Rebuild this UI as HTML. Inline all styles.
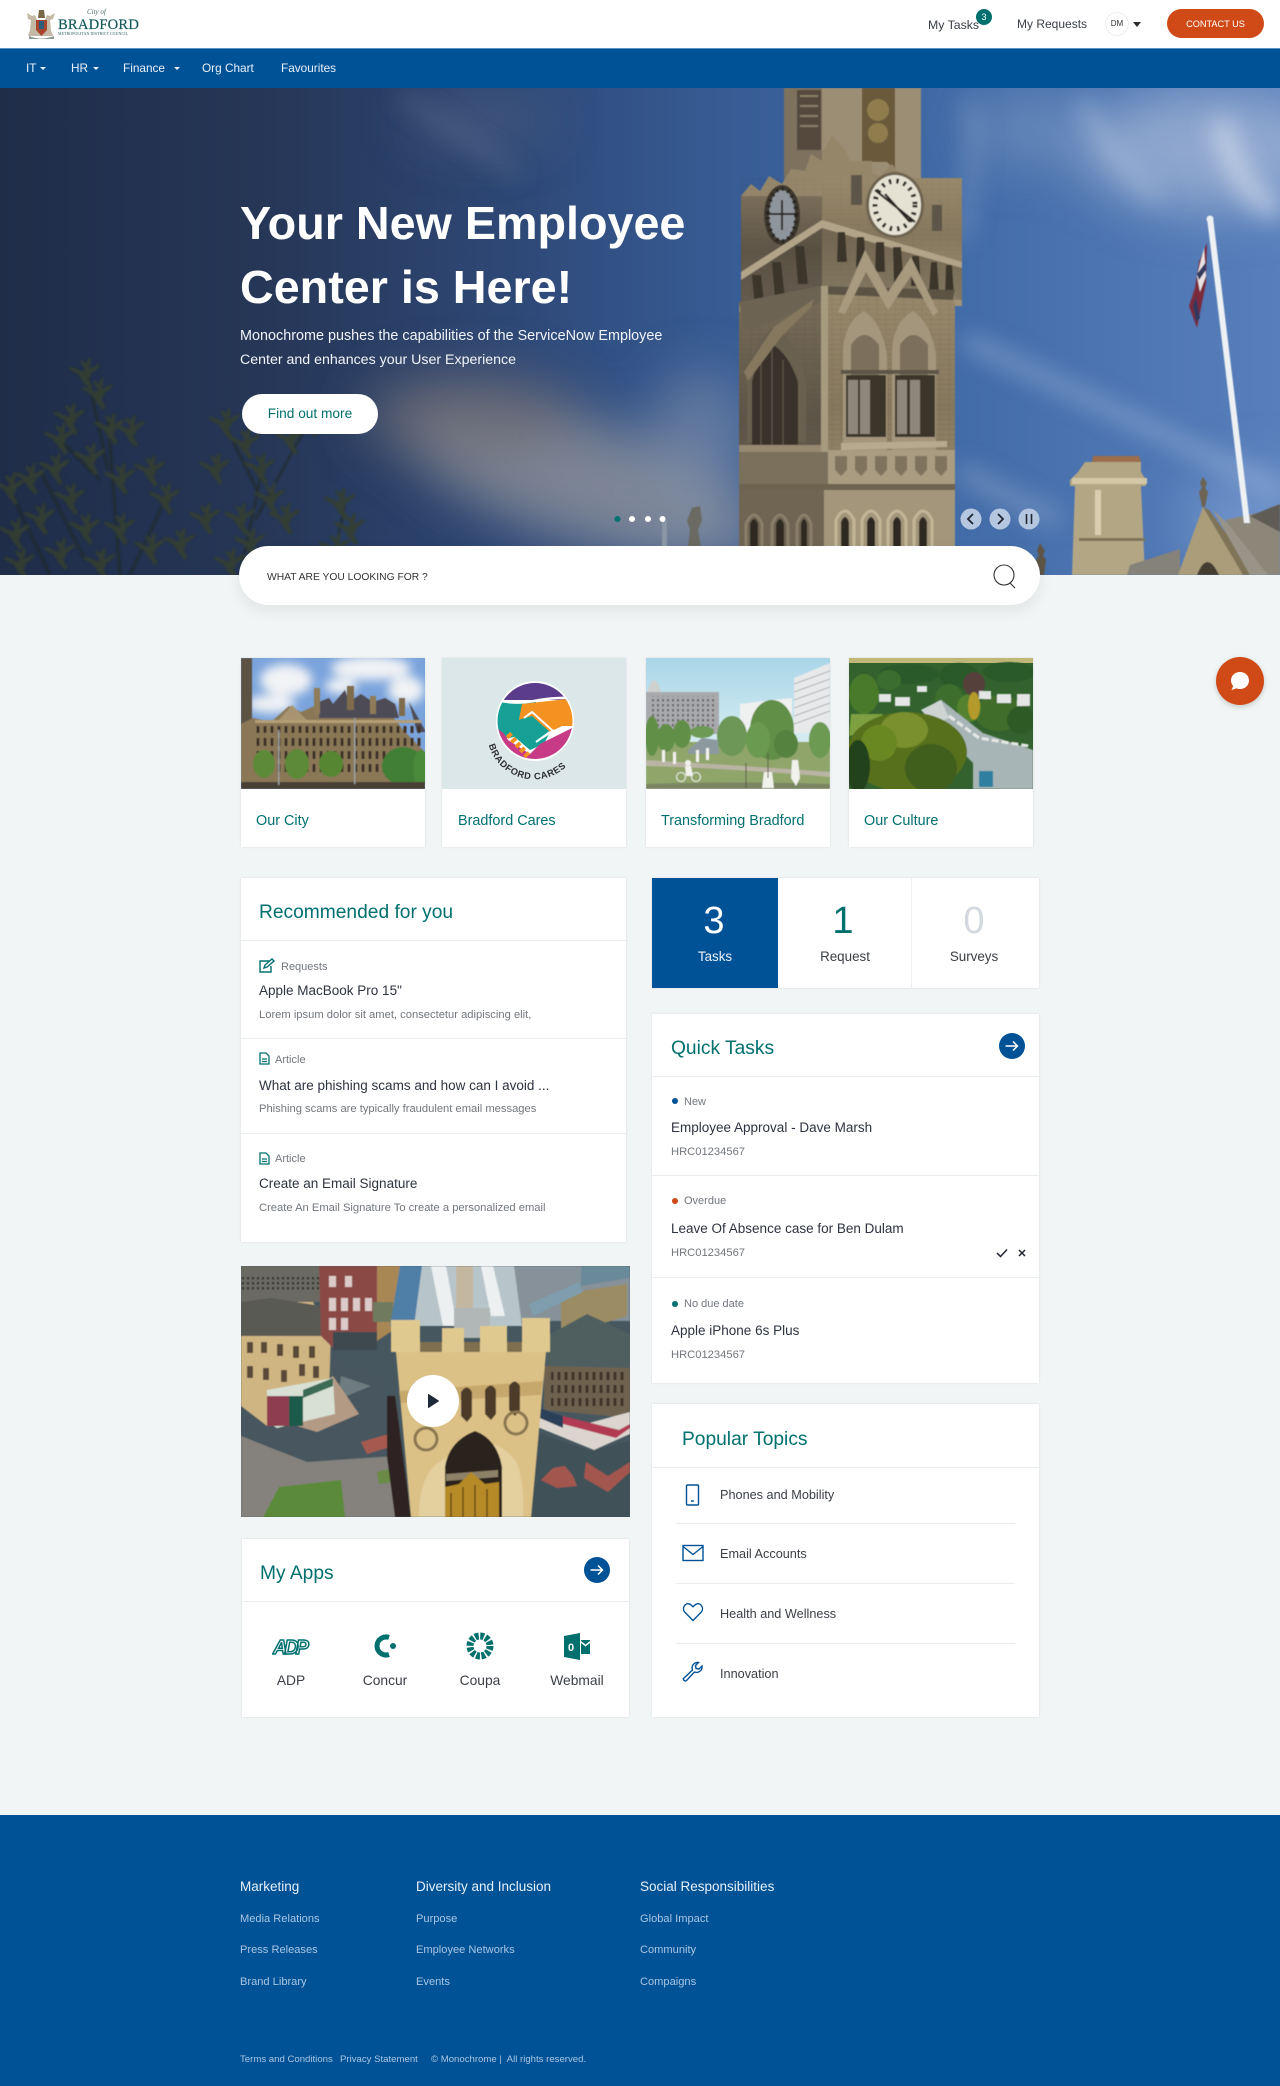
<!DOCTYPE html>
<html lang="en">
<head>
<meta charset="utf-8">
<title>Employee Center</title>
<style>
*{box-sizing:border-box}
html,body{margin:0;padding:0}
body{width:1280px;height:2086px;position:relative;overflow:hidden;background:#f1f5f5;font-family:"Liberation Sans",sans-serif;color:#2d3340}
.t{position:absolute;white-space:nowrap;line-height:20px;height:20px}
.c{transform:translateX(-50%)}
.box{position:absolute;background:#fff;box-shadow:0 0 2px rgba(0,0,0,.12)}
.ln{position:absolute;height:1px;background:#e9eded}
svg{position:absolute;display:block}
.h{color:#00706f;font-size:19.2px}
.ti{font-size:13.5px;color:#2d3340}
.su{font-size:11.2px;color:#72777d}
.la{font-size:11px;color:#72777d}
.nav{color:#e8f1fa;font-size:11.8px}
.fh{color:#e6f0fa;font-size:13.5px}
.fl{color:#a9c5e3;font-size:11.1px}
.fb{color:#a9c5e3;font-size:9.6px}
.cap{color:#00706f;font-size:14.4px}
.pt{font-size:12.7px;color:#3a3f46}
</style>
</head>
<body>

<!-- header -->
<div style="position:absolute;left:0;top:0;width:1280px;height:49px;background:#fff;border-bottom:1px solid #5b93c4"></div>
<svg style="left:25px;top:8px" width="33" height="34" viewBox="0 0 33 34">
<path d="M2 5l5 3 3-1 2 5h8l2-5 3 1 5-3-2 6-3 1 1 10 2 6H3l2-6 1-10-3-1z" fill="#c4b9a4"/>
<path d="M11 12h11v10l-5.500 6-5.500-6z" fill="#a8452f"/>
<path d="M14 13h5v8h-5z" fill="#2c5d7c"/>
<path d="M14 2h5l1 8h-7z" fill="#7a6648"/>
<path d="M4 28q12 5 25 0v3H4z" fill="#8a9a8e"/>
</svg>
<div class="t" style="left:87px;top:5px;font:italic 7px/14px 'Liberation Serif',serif;color:#476a68">City of</div>
<div class="t" style="left:58px;top:15px;font:14.6px/20px 'Liberation Serif',serif;color:#14595a;letter-spacing:.2px;-webkit-text-stroke:.2px #14595a">BRADFORD</div>
<div class="t" style="left:58px;top:29px;font:3.9px/10px 'Liberation Serif',serif;color:#2c5a5a;letter-spacing:.12px">METROPOLITAN DISTRICT COUNCIL</div>

<div class="t" style="left:928px;top:15px;font-size:12.3px;color:#3a3f46">My Tasks</div>
<div style="position:absolute;left:976px;top:9px;width:16px;height:16px;border-radius:50%;background:#00706f;color:#fff;font-size:9px;line-height:16px;text-align:center">3</div>
<div class="t" style="left:1017px;top:14px;font-size:12px;color:#3a3f46">My Requests</div>
<div style="position:absolute;left:1105px;top:12px;width:24px;height:24px;border-radius:50%;border:1px solid #eceeee;background:#fff;color:#333;font-size:8px;line-height:22px;text-align:center">DM</div>
<svg style="left:1133px;top:22px" width="8" height="5"><path d="M0 0h8L4 5z" fill="#2a2a2a"/></svg>
<div style="position:absolute;left:1167px;top:9px;width:97px;height:29px;border-radius:15px;background:#d04a17;color:#fff;font-size:9.2px;line-height:30px;text-align:center">CONTACT US</div>

<div style="position:absolute;left:0;top:49px;width:1280px;height:39px;background:#005296"></div>
<div class="t nav" style="left:26px;top:58px">IT</div>
<svg style="left:40px;top:67px" width="6" height="3"><path d="M0 0h6L3 3z" fill="#e8f1fa"/></svg>
<div class="t nav" style="left:71px;top:58px">HR</div>
<svg style="left:93px;top:67px" width="6" height="3"><path d="M0 0h6L3 3z" fill="#e8f1fa"/></svg>
<div class="t nav" style="left:123px;top:58px">Finance</div>
<svg style="left:174px;top:67px" width="6" height="3"><path d="M0 0h6L3 3z" fill="#e8f1fa"/></svg>
<div class="t nav" style="left:202px;top:58px">Org Chart</div>
<div class="t nav" style="left:281px;top:58px">Favourites</div>

<!-- hero -->
<svg style="left:0;top:88px" width="1280" height="487" viewBox="0 88 1280 487">
<defs>
<linearGradient id="sky" x1="0" x2="1" y1="0" y2="0">
<stop offset="0" stop-color="#1f2d49"/><stop offset=".2" stop-color="#263656"/><stop offset=".4" stop-color="#2e4876"/><stop offset=".55" stop-color="#365a92"/><stop offset=".75" stop-color="#426ca8"/><stop offset="1" stop-color="#587fbb"/>
</linearGradient>
<linearGradient id="tR" x1="0" x2="0" y1="0" y2="1">
<stop offset="0" stop-color="#98896c"/><stop offset=".45" stop-color="#86785e"/><stop offset="1" stop-color="#a39679"/>
</linearGradient>
<linearGradient id="tL" x1="0" x2="0" y1="0" y2="1">
<stop offset="0" stop-color="#7a6e5a"/><stop offset=".5" stop-color="#5e5547"/><stop offset="1" stop-color="#74695a"/>
</linearGradient>
<pattern id="course" width="9" height="5" patternUnits="userSpaceOnUse"><path d="M0 4.500h9M4 0v4.500" stroke="#3b3429" stroke-width=".5" opacity=".18"/></pattern>
<filter id="b30" x="-30%" y="-30%" width="160%" height="160%"><feGaussianBlur stdDeviation="26"/></filter>
<filter id="b12" x="-30%" y="-30%" width="160%" height="160%"><feGaussianBlur stdDeviation="12"/></filter>
<filter id="b1" x="-5%" y="-5%" width="110%" height="110%"><feGaussianBlur stdDeviation=".6"/></filter>
<filter id="b2" x="-5%" y="-5%" width="110%" height="110%"><feGaussianBlur stdDeviation="1"/></filter>
<g id="tuft">
<ellipse cx="-9" cy="0" rx="9" ry="2.200" transform="rotate(25)"/><ellipse cx="9" cy="0" rx="9" ry="2.200" transform="rotate(-35)"/>
<ellipse cx="0" cy="-9" rx="2.200" ry="9" transform="rotate(15)"/><ellipse cx="0" cy="8" rx="2.200" ry="8" transform="rotate(-20)"/>
<ellipse cx="-7" cy="-6" rx="7" ry="2" transform="rotate(50)"/><ellipse cx="7" cy="5" rx="7" ry="2" transform="rotate(40)"/>
<ellipse cx="0" cy="0" rx="6" ry="4"/>
</g>
</defs>
<rect x="0" y="88" width="1280" height="487" fill="url(#sky)"/>
<!-- clouds -->
<g filter="url(#b30)">
<ellipse cx="580" cy="480" rx="190" ry="60" fill="#95979c" opacity=".75" transform="rotate(18 580 480)"/>
<ellipse cx="470" cy="415" rx="110" ry="42" fill="#6c6b72" opacity=".7"/>
<ellipse cx="700" cy="440" rx="50" ry="70" fill="#8794aa" opacity=".55"/>
<ellipse cx="1210" cy="150" rx="130" ry="60" fill="#a9bbd8" opacity=".7"/>
<ellipse cx="1030" cy="130" rx="60" ry="35" fill="#8ea5cc" opacity=".45"/>
<ellipse cx="1260" cy="520" rx="80" ry="50" fill="#7e9ed2" opacity=".6"/>
<ellipse cx="480" cy="120" rx="70" ry="25" fill="#59688a" opacity=".5"/>
</g>
<g filter="url(#b12)">
<path d="M400 95L520 175" stroke="#7d8aa3" stroke-width="9" opacity=".4" fill="none"/>
<path d="M965 340L1280 490" stroke="#a9bfe3" stroke-width="10" opacity=".75" fill="none"/>
<path d="M1080 100Q1120 170 1160 200" stroke="#cad5ea" stroke-width="12" opacity=".45" fill="none"/>
<path d="M1220 120Q1240 200 1280 210" stroke="#e3e9f3" stroke-width="22" opacity=".6" fill="none"/>
<path d="M970 100Q980 160 960 240" stroke="#a7b9d7" stroke-width="12" opacity=".4" fill="none"/>
<path d="M960 470Q1010 500 1060 520" stroke="#9fb3d6" stroke-width="16" opacity=".5" fill="none"/>
</g>

<!-- tree -->
<g filter="url(#b2)" opacity=".85">
<path d="M108 420L120 575M88 375L108 470M60 440L100 480M40 470L85 560M262 470L240 575M225 425L262 500M310 420L255 520M345 505L330 575M10 490L50 575M165 500L130 575" stroke="#22291f" stroke-width="1.800" fill="none"/>
<g fill="#353f2d">
<use href="#tuft" x="85" y="375"/><use href="#tuft" x="98" y="395"/><use href="#tuft" x="70" y="420"/><use href="#tuft" x="110" y="430"/><use href="#tuft" x="60" y="440"/><use href="#tuft" x="130" y="432"/><use href="#tuft" x="90" y="460"/><use href="#tuft" x="55" y="470"/><use href="#tuft" x="30" y="480"/><use href="#tuft" x="10" y="490"/><use href="#tuft" x="70" y="500"/><use href="#tuft" x="120" y="480"/><use href="#tuft" x="150" y="472"/><use href="#tuft" x="165" y="500"/><use href="#tuft" x="40" y="520"/><use href="#tuft" x="85" y="530"/><use href="#tuft" x="120" y="530"/><use href="#tuft" x="15" y="535"/><use href="#tuft" x="60" y="555"/><use href="#tuft" x="100" y="565"/><use href="#tuft" x="150" y="550"/><use href="#tuft" x="20" y="565"/><use href="#tuft" x="225" y="425"/><use href="#tuft" x="245" y="445"/><use href="#tuft" x="215" y="470"/><use href="#tuft" x="260" y="470"/><use href="#tuft" x="290" y="440"/><use href="#tuft" x="310" y="422"/><use href="#tuft" x="270" y="500"/><use href="#tuft" x="240" y="520"/><use href="#tuft" x="285" y="520"/><use href="#tuft" x="205" y="520"/><use href="#tuft" x="250" y="545"/><use href="#tuft" x="340" y="505"/><use href="#tuft" x="350" y="530"/><use href="#tuft" x="335" y="550"/><use href="#tuft" x="230" y="565"/><use href="#tuft" x="180" y="545"/>
</g>
</g>

<!-- chimney and gable right -->
<g filter="url(#b1)">
<path d="M1085 462h56v10l5 8v6h-5l4 89h-73l3-89h-5v-6l8-8z" fill="#b3a685"/>
<path d="M1092 462l1-6h46l2 6z" fill="#9c6d4c"/>
<path d="M1072 478h75v6h-75z" fill="#d3c8a6"/>
<path d="M1079 538h66v3h-66z" fill="#7f7359"/>
<path d="M1095 490h6v45h-6z" fill="#d9cfb0"/>
<path d="M1127 575l3-10 50-16v26z" fill="#85827a"/>
<path d="M1244 575l-41-68-25 68z" fill="#ab9d79"/>
<path d="M1203 507l6 3 48 65h-14z" fill="#7f7359"/>
<path d="M1213 510l14 13 53 52h-30z" fill="#9a9488"/>
<path d="M1225 520l27-6 28-5v66h-12z" fill="#8d877a"/>
<path d="M1250 516l30-12v28z" fill="#5f5b54"/>
<path d="M1197 575q10-26 22 0z" fill="#453d31"/>
<path d="M1203 477l-3 6 2 5-3 4 3 15h3l3-15-3-4 2-5z" fill="#6d6352"/>
<path d="M1040 543l-3 8 2 4-3 5 2 15h6l2-15-3-5 2-4z" fill="#5e5546"/>
<!-- flag -->
<path d="M1207 218l6-1 37 306h-6z" fill="#eef1f4"/>
<circle cx="1210" cy="219" r="3.500" fill="#eef1f4"/>
<path d="M1207 243l-1 40-9 45-8-22 6-18 4-26z" fill="#7b2a3a"/>
<path d="M1204 248l2 28-6 16-3-16z" fill="#e9e3e3"/>
<path d="M1196 296l4 22-4 4-3-16z" fill="#31375f"/>
<path d="M1206 262l-9 12 2 6 7-10z" fill="#31375f"/>
<!-- statue -->
<path d="M692 508l8-2 2 14-4 10 3 17h-13l2-18-3-8z" fill="#6b6a62"/>
<path d="M662 520h5v27h-5z" fill="#8b97a6"/>
</g>

<!-- tower -->
<g filter="url(#b1)">
<rect x="784" y="88" width="137" height="110" fill="#9c8e74"/>
<rect x="784" y="88" width="38" height="110" fill="#7e725f"/>
<path d="M862 88h33v82l-8-8h-25z" fill="#6a5a3a"/>
<circle cx="878" cy="110" r="11" fill="#8f7d4e"/><circle cx="878" cy="133" r="10" fill="#8f7d4e"/>
<path d="M797 90h24v60h-24z" fill="#544a3e"/>
<path d="M800 95h18v2h-18zM800 105h18v2h-18zM800 115h18v2h-18zM800 125h18v2h-18z" fill="#8a7d67"/>
<path d="M741 196l10-12 9 7 9-15 13 8 9-15 14 2 6-17 11 7v-8l10-18 14 16 4 10h22v12l8 3 12-12 10 14h8l14 10-2 4 10 8 10 3-2 4H741z" fill="#95866a"/>
<path d="M741 196h81v110h-81z" fill="url(#tL)"/>
<path d="M822 178h140v128H822z" fill="url(#tR)"/>
<rect x="741" y="178" width="221" height="128" fill="url(#course)" opacity=".5"/>
<!-- clocks -->
<ellipse cx="782" cy="215" rx="18" ry="30" fill="#3d372f"/>
<ellipse cx="782" cy="215" rx="13" ry="25" fill="#8f959c"/>
<path d="M766 214h30M782 200v30" stroke="#2c2823" stroke-width="2"/>
<ellipse cx="782" cy="215" rx="14" ry="26" fill="none" stroke="#26221d" stroke-width="4" stroke-dasharray="2 4"/>
<ellipse cx="895" cy="205" rx="29" ry="33" fill="#6e6350"/>
<ellipse cx="895" cy="205" rx="26" ry="30" fill="#e5e2d3"/>
<ellipse cx="895" cy="205" rx="20" ry="24" fill="none" stroke="#2a2621" stroke-width="5" stroke-dasharray="2.500 5"/>
<path d="M875 190L915 222M885 194L910 222" stroke="#2a2621" stroke-width="2.200"/>
<rect x="851" y="175" width="11" height="30" fill="#5d5446"/>
<rect x="932" y="205" width="10" height="26" fill="#5d5446"/>
<!-- ledges and corbels -->
<path d="M741 272L822 220l140 42v6L822 228 741 280z" fill="#b2a489"/>
<path d="M741 280l81-52 140 40v32l-140-14-81 16z" fill="#4f473c" opacity=".35"/>
<g fill="#3a342c">
<path d="M838 232h7l2 30h-10zM857 237h7l2 30h-10zM876 242h8l1 30h-10zM893 247h8l3 40h-10zM912 256h7l2 30h-10zM931 262h6l2 30h-10zM946 265h6l2 30h-9z"/>
<path d="M752 275h9l4 36h-10zM772 262h9l4 36h-10zM795 246h9l4 38h-10z"/>
</g>
<path d="M739 302l83-10 133-2v262H739z" fill="url(#tR)"/>
<path d="M739 312l82-24v264H739z" fill="url(#tL)"/>
<rect x="739" y="290" width="216" height="262" fill="url(#course)"/>
<path d="M739 302l6 30 76-30v-16z" fill="#6d6353"/>
<path d="M821 286l134 4-2 10-132-6z" fill="#5b5244"/>
<!-- right face windows -->
<g fill="#a3967b">
<path d="M843 450V355q0-32 21-44 18 12 23 44v95z"/>
<path d="M892 450V355q0-32 21-44 18 12 23 44v95z"/>
</g>
<path d="M851 345q13-20 28 0v40h-28zM900 345q13-20 28 0v40h-28z" fill="#7c705c"/>
<g fill="#3a342c"><path d="M846 375h40v62h-40zM895 375h40v62h-40z"/></g>
<g fill="#8f877c"><rect x="848" y="380" width="10" height="54"/><rect x="860" y="380" width="10" height="54"/><rect x="897" y="380" width="10" height="54"/><rect x="910" y="380" width="10" height="54"/></g>
<path d="M838 312l27-62 23 42 23-35 27 55-5 4-22-40-23 34-22-38-21 42z" fill="#a89a7f"/>
<path d="M841 370h98v4h-98z" fill="#5d5446"/>
<path d="M841 443l106-2v6l-106 3z" fill="#b7aa8e"/>
<!-- left face windows -->
<path d="M747 442v-60q6-42 27-55 22 12 32 55v60z" fill="#6a6050"/>
<path d="M752 445V382q5-25 20-38 17 10 26 38v63z" fill="#38332b"/>
<path d="M761 445V360M772 445V350M783 445V360" stroke="#5a5144" stroke-width="1.500"/>
<path d="M744 372l30-45 40-28-3 8-30 30-33 44z" fill="#85785f"/>
<path d="M739 445h82v9h-82z" fill="#978971"/>
<path d="M821 286h7v265h-7z" fill="#a69a7f"/>
<!-- shields band -->
<path d="M828 450h127v35H828z" fill="#a99c80"/>
<path d="M739 452h89v33h-89z" fill="#7a6f5c"/>
<g fill="#7f735d"><path d="M835 456h12v14l-6 6-6-6zM855 456h12v14l-6 6-6-6zM875 456h12v14l-6 6-6-6zM895 456h12v14l-6 6-6-6zM915 456h12v14l-6 6-6-6zM935 456h12v14l-6 6-6-6z"/></g>
<path d="M739 484h216v6H739z" fill="#6d634f"/>
<!-- lower arcade -->
<path d="M739 490h85v62h-85z" fill="#6f6553"/>
<path d="M824 490h131v62H824z" fill="#a3967a"/>
<g fill="none" stroke="#c3b698" stroke-width="3">
<path d="M836 552v-32q9-18 18 0v32M862 552v-32q9-18 18 0v32M888 552v-32q9-18 18 0v32M914 552v-32q9-18 18 0v32"/>
<path d="M746 552v-28q8-18 16 0v28M772 552v-28q8-18 16 0v28M797 552v-28q7-18 14 0v28" stroke="#8b7f69"/>
</g>
<g fill="#2f2a24">
<path d="M841 552v-30q4-10 8 0v30zM867 552v-30q4-10 8 0v30zM893 552v-30q4-10 8 0v30zM919 552v-30q4-10 8 0v30z"/>
<path d="M750 552v-28q4-10 8 0v28zM776 552v-28q4-10 8 0v28zM801 552v-28q3-10 6 0v28z"/>
</g>
</g>

<!-- dots & controls -->
<circle cx="617.5" cy="519" r="3" fill="#00706f"/>
<circle cx="632" cy="519" r="3" fill="#fff"/>
<circle cx="648" cy="519" r="3" fill="#fff"/>
<circle cx="662.5" cy="519" r="3" fill="#fff"/>
<circle cx="971" cy="519" r="10.5" fill="#b5c7e0"/>
<circle cx="1000" cy="519" r="10.5" fill="#b5c7e0"/>
<circle cx="1029" cy="519" r="10.5" fill="#b5c7e0"/>
<path d="M973 514l-5 5 5 5" fill="none" stroke="#1f2430" stroke-width="1.800"/>
<path d="M998 514l5 5-5 5" fill="none" stroke="#1f2430" stroke-width="1.800"/>
<path d="M1026.5 514v10M1031.5 514v10" fill="none" stroke="#1f2430" stroke-width="1.600"/>
</svg>

<div class="t" style="left:240px;top:191px;font-size:46.7px;font-weight:700;color:#fff;height:64px;line-height:64px">Your New Employee</div>
<div class="t" style="left:240px;top:255px;font-size:46.7px;font-weight:700;color:#fff;height:64px;line-height:64px">Center is Here!</div>
<div class="t" style="left:240px;top:326px;font-size:14.4px;color:#f1f4f9">Monochrome pushes the capabilities of the ServiceNow Employee</div>
<div class="t" style="left:240px;top:350px;font-size:14.2px;color:#f1f4f9">Center and enhances your User Experience</div>
<div style="position:absolute;left:242px;top:394px;width:136px;height:40px;border-radius:20px;background:#fff;color:#00706f;font-size:13.7px;line-height:40px;text-align:center">Find out more</div>

<!-- search -->
<div style="position:absolute;left:239px;top:546px;width:801px;height:59px;border-radius:29.5px;background:#fff;box-shadow:0 6px 16px rgba(0,0,0,.07)"></div>
<div class="t" style="left:267px;top:568px;font-size:10.3px;color:#333">WHAT ARE YOU LOOKING FOR ?</div>
<svg style="left:990px;top:562px" width="28" height="28"><circle cx="14" cy="13" r="10" fill="none" stroke="#333" stroke-width="1.100"/><path d="M20 21l5 5" stroke="#333" stroke-width="1.200"/></svg>

<!-- chat -->
<div style="position:absolute;left:1216px;top:657px;width:48px;height:48px;border-radius:50%;background:#d04a17;box-shadow:0 2px 6px rgba(0,0,0,.18)"></div>
<svg style="left:1228px;top:669px" width="24" height="24"><path d="M12 3c5 0 9 3.600 9 8.500S17 20 12 20c-1.500 0-2.500-.2-3.500-.6L3.500 21l1.700-4C3.800 15.500 3 13.600 3 11.500 3 6.600 7 3 12 3z" fill="#fff"/></svg>

<!-- image cards -->
<div class="box" style="left:241px;top:658px;width:184px;height:189px"></div>
<div class="box" style="left:442px;top:658px;width:184px;height:189px"></div>
<div class="box" style="left:646px;top:658px;width:184px;height:189px"></div>
<div class="box" style="left:849px;top:658px;width:184px;height:189px"></div>

<svg style="left:241px;top:658px" width="184" height="131" viewBox="0 0 184 131">
<defs>
<filter id="s1" x="-5%" y="-5%" width="110%" height="110%"><feGaussianBlur stdDeviation=".6"/></filter>
<filter id="s4" x="-20%" y="-20%" width="140%" height="140%"><feGaussianBlur stdDeviation="5"/></filter>
<pattern id="win" width="7" height="13" patternUnits="userSpaceOnUse"><rect x="1.500" y="2" width="3" height="8" fill="#3d3325"/></pattern>
<pattern id="win2" width="5" height="5" patternUnits="userSpaceOnUse"><rect x="1" y="1" width="2" height="2.500" fill="#2e2a28"/></pattern>
</defs>
<rect width="184" height="131" fill="#7aa3dc"/>
<g filter="url(#s4)" fill="#f1f3f5"><ellipse cx="45" cy="22" rx="26" ry="16"/><ellipse cx="130" cy="10" rx="40" ry="12"/><ellipse cx="165" cy="32" rx="18" ry="14"/><ellipse cx="30" cy="46" rx="24" ry="9"/><ellipse cx="100" cy="28" rx="16" ry="8"/></g>
<g filter="url(#s1)">
<rect x="0" y="0" width="11" height="70" fill="#5b5344"/>
<path d="M0 66l12-6 18 4 18-16 12 6 18-8 10 8h60l16 20 20 20v37H0z" fill="#8a7756"/>
<path d="M78 60V44l10-4 4 6 12-14 4 12 12-8 12 8 12-4 10 6 4 14z" fill="#4d4c54"/>
<rect x="73" y="30" width="6" height="26" fill="#8e7b59"/><rect x="106" y="28" width="7" height="24" fill="#7e6c4e"/><rect x="129" y="38" width="6" height="18" fill="#8e7b59"/><rect x="158" y="40" width="6" height="18" fill="#7e6c4e"/>
<path d="M36 64l15-17 17 17z" fill="#a89470"/>
<path d="M168 44l8 30h8V72z" fill="#4d4c54"/>
<rect x="14" y="62" width="166" height="3" fill="#b39e77"/>
<rect x="14" y="68" width="166" height="50" fill="url(#win)"/>
<ellipse cx="23" cy="106" rx="11" ry="14" fill="#5d8a38"/><ellipse cx="56" cy="106" rx="12" ry="15" fill="#5d8a38"/><ellipse cx="90" cy="106" rx="12" ry="13" fill="#578632"/>
<ellipse cx="162" cy="108" rx="21" ry="19" fill="#3f7f35"/><ellipse cx="180" cy="110" rx="8" ry="18" fill="#4a8a3a"/>
<rect y="124" width="184" height="7" fill="#4a4134"/>
<rect x="37" y="72" width="1.500" height="55" fill="#9a9e9e"/><rect x="113" y="60" width="1.500" height="66" fill="#9a9e9e"/>
</g>
</svg>

<svg style="left:442px;top:658px" width="184" height="131" viewBox="0 0 184 131">
<rect width="184" height="131" fill="#dbe7e8"/>
<defs><clipPath id="lc"><ellipse cx="93" cy="63" rx="37.500" ry="38"/></clipPath></defs>
<ellipse cx="93" cy="63" rx="39" ry="40" fill="#fff"/>
<g clip-path="url(#lc)">
<rect x="50" y="20" width="90" height="22" fill="#5a3b8c"/>
<path d="M50 42q20 2 30 2l14 0v28l-26 8-18 0z" fill="#17a196"/>
<path d="M80 46l54-6v28l-14 0-12 6-22-12-10 4z" fill="#f39220"/>
<path d="M90 58l18 16-6 12-14 6-26-22 14-8z" fill="#17a196"/>
<path d="M50 70q10 0 16 12l22 14 10-10 32-16v40H50z" fill="#c73b86"/>
<path d="M50 41q22 6 42 2t44-3" fill="none" stroke="#fff" stroke-width="2.500"/>
<path d="M82 60l8-6 20 18M94 84l14-10M100 80l12-8" fill="none" stroke="#fff" stroke-width="2"/>
<path d="M66 76l20 22" stroke="#f39220" stroke-width="6" stroke-dasharray="4 2.500" fill="none"/>
</g>
<path id="arcL" d="M46 84A47 47 0 0 0 138 84" fill="none"/>
<text font-family="Liberation Sans,sans-serif" font-size="9.300" font-weight="700" fill="#2f2f33" letter-spacing=".6"><textPath href="#arcL" startOffset="3">BRADFORD CARES</textPath></text>
</svg>

<svg style="left:646px;top:658px" width="184" height="131" viewBox="0 0 184 131">
<defs><linearGradient id="s3" x1="0" x2="0" y1="0" y2="1"><stop offset="0" stop-color="#a9d6e8"/><stop offset=".6" stop-color="#d3ebf1"/></linearGradient></defs>
<rect width="184" height="131" fill="url(#s3)"/>
<g filter="url(#s1)">
<path d="M0 34h73v42H0z" fill="#a9aaad"/>
<path d="M1 34q3-10 7-12 5 2 7 12z" fill="#cfd0d0"/>
<rect x="4" y="38" width="66" height="34" fill="url(#win2)" opacity=".55"/>
<path d="M94 46l32-4 20-2v34H94z" fill="#eff1f1"/>
<path d="M148 20l36-15v70h-36z" fill="#e7e9ea"/>
<g stroke="#9ca0a3" stroke-width=".8"><path d="M148 26l36-13M148 34l36-13M148 42l36-13M148 50l36-13M148 58l36-13M148 66l36-13"/></g>
<rect y="84" width="184" height="47" fill="#8fa56a"/>
<path d="M0 102q70 4 184 12v5Q80 110 0 108z" fill="#bab4a4"/>
<path d="M0 126q90-3 184 0v5H0z" fill="#7c8562"/>
<g fill="#628f47">
<ellipse cx="6" cy="78" rx="7" ry="20"/><ellipse cx="20" cy="80" rx="9" ry="14"/><ellipse cx="36" cy="76" rx="9" ry="14"/>
<ellipse cx="86" cy="78" rx="15" ry="20" fill="#6c9756"/>
<ellipse cx="126" cy="72" rx="22" ry="30"/>
<ellipse cx="112" cy="82" rx="12" ry="18" fill="#6a9a50"/>
<ellipse cx="140" cy="86" rx="12" ry="14" fill="#568240"/>
<ellipse cx="174" cy="82" rx="11" ry="18" fill="#6c9a52"/>
<ellipse cx="56" cy="74" rx="12" ry="6" fill="#6d9a54"/>
</g>
<path d="M42 92l14-12 16 2 1 14H42z" fill="#8c9aa0"/>
<g fill="#f2f2ec"><circle cx="42" cy="105" r="3"/><path d="M39 108h6l2 10h-7z"/><path d="M146 102h6l2 18-4 8-5-8z"/><path d="M118 114h8l2 16h-12z"/><path d="M16 92h3v12h-3zM27 94h3v12h-3zM60 90h3v12h-3zM50 92h3v12h-3z"/></g>
<g fill="none" stroke="#f2f2ec" stroke-width="1"><circle cx="35" cy="119" r="4.500"/><circle cx="50" cy="119" r="4.500"/></g>
<path d="M122 95v25M100 105v25" stroke="#5a5448" stroke-width="1"/>
</g>
</svg>

<svg style="left:849px;top:658px" width="184" height="131" viewBox="0 0 184 131">
<rect width="184" height="131" fill="#33622f"/>
<rect width="184" height="5" fill="#c0b676"/>
<g filter="url(#s1)">
<g fill="#2a5a2c"><ellipse cx="60" cy="16" rx="30" ry="10"/><ellipse cx="110" cy="18" rx="20" ry="13"/><ellipse cx="160" cy="14" rx="26" ry="10"/><ellipse cx="100" cy="40" rx="14" ry="14" fill="#3c6e2e"/><ellipse cx="150" cy="55" rx="24" ry="18" fill="#3f6e2c"/><ellipse cx="172" cy="62" rx="14" ry="14" fill="#2f5a26"/><ellipse cx="120" cy="50" rx="12" ry="14" fill="#54822f"/></g>
<ellipse cx="15" cy="36" rx="15" ry="20" fill="#4a7a2c"/>
<ellipse cx="40" cy="22" rx="12" ry="10" fill="#3a6e2f"/>
<ellipse cx="125" cy="26" rx="11" ry="12" fill="#56403a"/>
<ellipse cx="125" cy="48" rx="6" ry="14" fill="#b39a2b"/>
<g fill="#e3e6e4"><rect x="30" y="36" width="12" height="8"/><rect x="46" y="39" width="15" height="9"/><rect x="130" y="33" width="12" height="8"/><rect x="168" y="36" width="13" height="12"/><rect x="148" y="36" width="14" height="9"/><rect x="68" y="28" width="10" height="6"/></g>
<path d="M2 56h32l-8 16-26 6z" fill="#7fa03f"/>
<path d="M92 42l42 33 50 17v39H124v-26L72 52z" fill="#a7b5b6"/>
<path d="M92 42l-20 10 14 14 14-6 z" fill="#ced4d2"/>
<path d="M100 58l30 22 50 8" stroke="#e5e8e4" stroke-width="3" stroke-dasharray="7 3" fill="none"/>
<ellipse cx="58" cy="94" rx="60" ry="40" fill="#566f1f"/>
<ellipse cx="55" cy="72" rx="24" ry="18" fill="#7a8f2f"/>
<ellipse cx="30" cy="85" rx="18" ry="18" fill="#6b8824"/>
<ellipse cx="82" cy="110" rx="26" ry="24" fill="#415f1e"/>
<ellipse cx="9" cy="108" rx="12" ry="26" fill="#23431b"/>
<rect x="130" y="113" width="14" height="16" fill="#2e7fa0"/>
</g>
</svg>

<div class="t cap" style="left:256px;top:811px">Our City</div>
<div class="t cap" style="left:458px;top:811px">Bradford Cares</div>
<div class="t cap" style="left:661px;top:811px">Transforming Bradford</div>
<div class="t cap" style="left:864px;top:811px">Our Culture</div>

<!-- recommended -->
<div class="box" style="left:241px;top:878px;width:385px;height:364px"></div>
<div class="t h" style="left:259px;top:903px">Recommended for you</div>
<div class="ln" style="left:241px;top:940px;width:385px"></div>
<div class="ln" style="left:241px;top:1038px;width:385px"></div>
<div class="ln" style="left:241px;top:1133px;width:385px"></div>

<svg style="left:258px;top:958px" width="17" height="16" fill="none" stroke="#00706f" stroke-width="1.400"><path d="M11 3H2v11h11V8"/><path d="M6 10l1-3 7-6 2 2-7 6z"/></svg>
<div class="t la" style="left:281px;top:957px">Requests</div>
<div class="t ti" style="left:259px;top:981px">Apple MacBook Pro 15"</div>
<div class="t su" style="left:259px;top:1005px">Lorem ipsum dolor sit amet, consectetur adipiscing elit,</div>

<svg style="left:259px;top:1052px" width="11" height="13" fill="none" stroke="#00706f" stroke-width="1.300"><path d="M1 1h6l3 3v8H1z"/><path d="M3 7h5M3 9.500h5"/></svg>
<div class="t la" style="left:275px;top:1050px">Article</div>
<div class="t ti" style="left:259px;top:1076px">What are phishing scams and how can I avoid ...</div>
<div class="t su" style="left:259px;top:1099px">Phishing scams are typically fraudulent email messages</div>

<svg style="left:259px;top:1152px" width="11" height="13" fill="none" stroke="#00706f" stroke-width="1.300"><path d="M1 1h6l3 3v8H1z"/><path d="M3 7h5M3 9.500h5"/></svg>
<div class="t la" style="left:275px;top:1149px">Article</div>
<div class="t ti" style="left:259px;top:1174px">Create an Email Signature</div>
<div class="t su" style="left:259px;top:1198px">Create An Email Signature To create a personalized email</div>

<!-- stats -->
<div class="box" style="left:652px;top:878px;width:387px;height:110px"></div>
<div style="position:absolute;left:652px;top:878px;width:126px;height:110px;background:#005296"></div>
<div style="position:absolute;left:911px;top:878px;width:1px;height:110px;background:#eef0f0"></div>
<div class="t c" style="left:714px;top:901px;font-size:38px;height:40px;line-height:40px;color:#fff">3</div>
<div class="t c" style="left:715px;top:947px;font-size:13.4px;color:#e8f1fa">Tasks</div>
<div class="t c" style="left:843px;top:901px;font-size:38px;height:40px;line-height:40px;color:#00706f">1</div>
<div class="t c" style="left:845px;top:947px;font-size:13.4px;color:#3a3f46">Request</div>
<div class="t c" style="left:974px;top:901px;font-size:38px;height:40px;line-height:40px;color:#d3d8e0">0</div>
<div class="t c" style="left:974px;top:947px;font-size:13.4px;color:#3a3f46">Surveys</div>

<!-- quick tasks -->
<div class="box" style="left:652px;top:1014px;width:387px;height:369px"></div>
<div class="t h" style="left:671px;top:1039px">Quick Tasks</div>
<svg style="left:999px;top:1033px" width="26" height="26"><circle cx="13" cy="13" r="13" fill="#005296"/><path d="M6.500 13h12M14 8.500l4.500 4.500-4.500 4.500" fill="none" stroke="#fff" stroke-width="1.500"/></svg>
<div class="ln" style="left:652px;top:1076px;width:387px"></div>
<div class="ln" style="left:652px;top:1175px;width:387px"></div>
<div class="ln" style="left:652px;top:1277px;width:387px"></div>

<div style="position:absolute;left:672px;top:1098px;width:6px;height:6px;border-radius:50%;background:#005296"></div>
<div class="t la" style="left:684px;top:1092px">New</div>
<div class="t ti" style="left:671px;top:1118px">Employee Approval - Dave Marsh</div>
<div class="t su" style="left:671px;top:1142px">HRC01234567</div>

<div style="position:absolute;left:672px;top:1198px;width:6px;height:6px;border-radius:50%;background:#d04a17"></div>
<div class="t la" style="left:684px;top:1191px">Overdue</div>
<div class="t ti" style="left:671px;top:1219px">Leave Of Absence case for Ben Dulam</div>
<div class="t su" style="left:671px;top:1243px">HRC01234567</div>
<svg style="left:996px;top:1248px" width="12" height="10"><path d="M1 5l3.500 3.500L11 1.500" fill="none" stroke="#1f2430" stroke-width="1.500"/></svg>
<svg style="left:1018px;top:1249px" width="8" height="8"><path d="M1 1l6 6M7 1L1 7" fill="none" stroke="#1f2430" stroke-width="1.500"/></svg>

<div style="position:absolute;left:672px;top:1301px;width:6px;height:6px;border-radius:50%;background:#00706f"></div>
<div class="t la" style="left:684px;top:1294px">No due date</div>
<div class="t ti" style="left:671px;top:1321px">Apple iPhone 6s Plus</div>
<div class="t su" style="left:671px;top:1345px">HRC01234567</div>

<!-- popular -->
<div class="box" style="left:652px;top:1404px;width:387px;height:313px"></div>
<div class="t h" style="left:682px;top:1430px">Popular Topics</div>
<div class="ln" style="left:652px;top:1467px;width:387px"></div>
<div class="ln" style="left:676px;top:1523px;width:339px"></div>
<div class="ln" style="left:676px;top:1583px;width:339px"></div>
<div class="ln" style="left:676px;top:1643px;width:339px"></div>
<svg style="left:682px;top:1482px" width="22" height="26" fill="none" stroke="#005296" stroke-width="1.400"><rect x="4.500" y="3" width="12" height="20" rx="1"/><path d="M9 19h3"/></svg>
<svg style="left:682px;top:1544px" width="22" height="18" fill="none" stroke="#005296" stroke-width="1.400"><rect x="1" y="1.500" width="20" height="15"/><path d="M1 2.500l10 8 10-8"/></svg>
<svg style="left:682px;top:1602px" width="22" height="20" fill="none" stroke="#005296" stroke-width="1.400"><path d="M11 18.500L2.800 10.200C-.8 6 3.800-.5 8.500 2.500L11 4.800l2.500-2.300c4.700-3 9.300 3.500 5.700 7.700z"/></svg>
<svg style="left:682px;top:1661px" width="22" height="22" fill="none" stroke="#005296" stroke-width="1.400"><path d="M1.500 17.500l9-8.500c-1.500-4 1.500-8 6-7.500l-3 3 .5 3 3 .5 3-3c.5 4.500-3.500 7.500-7.500 6l-8 8.500c-1 .8-1.800.5-2.500-.2-.7-.7-1-1.200-.5-1.800z"/></svg>
<div class="t pt" style="left:720px;top:1485px">Phones and Mobility</div>
<div class="t pt" style="left:720px;top:1544px">Email Accounts</div>
<div class="t pt" style="left:720px;top:1604px">Health and Wellness</div>
<div class="t pt" style="left:720px;top:1664px">Innovation</div>

<!-- video -->
<svg style="left:241px;top:1266px" width="389" height="251" viewBox="0 0 389 251">
<rect width="389" height="251" fill="#46575f"/>
<g filter="url(#s1)">
<!-- left -->
<rect width="80" height="36" fill="#6b6a63"/>
<rect y="10" width="78" height="14" fill="url(#win2)"/>
<path d="M0 36h72l18 34-2 55-62 35-26-20z" fill="#cfb582"/>
<path d="M0 36l30-4 50 8 8 30H0z" fill="#5a5a55"/>
<g fill="#5a4a38"><rect x="6" y="76" width="6" height="11"/><rect x="20" y="76" width="6" height="11"/><rect x="36" y="78" width="6" height="12"/><rect x="52" y="80" width="6" height="12"/><rect x="68" y="80" width="6" height="12"/><rect x="6" y="100" width="6" height="12"/><rect x="22" y="102" width="6" height="12"/><rect x="40" y="104" width="6" height="12"/><rect x="58" y="98" width="6" height="12"/><rect x="72" y="100" width="6" height="12"/></g>
<!-- red -->
<path d="M78 0h58v82H92l-12-12z" fill="#8a4a44"/>
<g fill="#dccbc8"><rect x="88" y="32" width="7" height="13"/><rect x="100" y="32" width="7" height="13"/><rect x="112" y="32" width="7" height="13"/><rect x="124" y="32" width="7" height="13"/><rect x="88" y="52" width="7" height="12"/><rect x="100" y="52" width="7" height="12"/><rect x="88" y="10" width="7" height="11"/><rect x="104" y="10" width="7" height="11"/></g>
<path d="M92 66h44v18H92z" fill="#3c4950"/>
<path d="M136 0h30v55l-30 20z" fill="#a88755"/>
<path d="M132 36h20v20h-20z" fill="#6f7a5e"/>
<!-- street -->
<path d="M90 90l56 20 8 80-88 6-66-26v-30l26 20 62-35z" fill="#46565e"/>
<path d="M100 110l30 10-34 14 2-10z" fill="#6e7c80"/>
<path d="M66 128l26-18 26 38-42 18-20-6z" fill="#b39a84"/>
<path d="M26 124l66-12 2 36-58 14-10-6z" fill="#d8e0d4"/>
<path d="M26 130h22v30H26z" fill="#8d3d4d"/>
<path d="M48 130h14v30H48z" fill="#1f5a4a"/>
<path d="M62 124l30-12v8l-30 12z" fill="#3a6a55"/>
<!-- plaza -->
<path d="M0 170l66 26 88-6 16 61H0z" fill="#85827d"/>
<path d="M22 251l16-30 62-7 4 37z" fill="#5b8a3b"/>
<path d="M136 206l16-4 2 14-16 2z" fill="#6a8a44"/>
<path d="M120 176l28-8 4 12-26 8z" fill="#a65a50"/>
<!-- right -->
<path d="M260 0h129v55h-129z" fill="#86919a"/>
<path d="M320 28l66-10v32l-66 20z" fill="#9b8c63"/>
<path d="M292 50l50-24-4-10-50 22z" fill="#7f9dac"/>
<path d="M340 0h49v12l-49 8z" fill="#6b8a9a"/>
<path d="M306 70l40-22 43 20v40l-83-2z" fill="#4f5f60"/>
<path d="M303 100l86 2v50l-86-8z" fill="#6e6250"/>
<rect x="310" y="106" width="75" height="36" fill="url(#win)"/>
<path d="M294 140l50 18 45-12v22l-36 16-59-24z" fill="#dcd5cf"/>
<path d="M294 140l28 10v12l-28-12z" fill="#2a4158"/>
<path d="M322 150l56 14 11-6v4l-14 10-53-14z" fill="#b13a52"/>
<path d="M290 165l60 20 39-10v76H290z" fill="#3f5159"/>
<path d="M312 202l-12 12 16 8 20-2-4-10-8-10zM345 196l22 14 22-14v10l-22 20-24-14z" fill="#a3574e"/>
<!-- tower -->
<path d="M159 0h114l8 60H150z" fill="#b7c5cb"/>
<path d="M159 0h22l-8 60h-24z" fill="#4f7ea6"/>
<path d="M190 0l12 60h14L205 0zM240 0l10 50h14L252 0z" fill="#edf0f0"/>
<path d="M215 0h17v42h-17z" fill="#c4b7a0"/>
<path d="M213 42h36v30h-36z" fill="#b0b7b6"/>
<path d="M154 76h152l-16 175H170z" fill="#dcc187"/>
<path d="M150 54h29v32h-29zM201 62h22v24h-22zM239 60h27v26h-27zM281 52h28v34h-28z" fill="#e0c98f"/>
<path d="M179 76h22v10h-22zM223 76h16v10h-16zM266 76h15v10h-15z" fill="#7e7050"/>
<path d="M146 130l8 0 16 121h-16l-8-60z" fill="#2d2420"/>
<path d="M158 125l144-10-2 14-140 8z" fill="#c7a86c"/>
<g fill="#4e3a2a"><path d="M196 128q6-9 11 0v24l-5 6-6-6zM220 126q6-9 11 0v24l-5 6-6-6zM244 124q6-9 11 0v24l-5 6-6-6zM268 120q6-9 11 0v24l-5 6-6-6z"/></g>
<circle cx="185" cy="173" r="11" fill="none" stroke="#8a7650" stroke-width="3"/>
<circle cx="275" cy="157" r="11" fill="none" stroke="#8a7650" stroke-width="3"/>
<path d="M178 251q0-50 30-60 40-32 68 6 8 24 6 54z" fill="#e4cf9f"/>
<path d="M204 251v-50q4-26 30-36 22 8 27 36v50z" fill="#2c241e"/>
<path d="M205 208l52-4v7l-52 4z" fill="#8d8168"/>
<path d="M204 251v-30l14-3 12-12 14 12 14-2v35z" fill="#b68a28"/>
<path d="M210 251v-24M222 251v-30M234 251v-32M246 251v-28" stroke="#6b4d14" stroke-width="1.500"/>
</g>
</svg>
<div style="position:absolute;left:407px;top:1375px;width:52px;height:52px;border-radius:50%;background:#fff"></div>
<svg style="left:427px;top:1393px" width="13" height="16"><path d="M1.500 1.500v13l10-6.500z" fill="#1f2a38" stroke="#1f2a38" stroke-linejoin="round"/></svg>

<!-- my apps -->
<div class="box" style="left:242px;top:1539px;width:387px;height:178px"></div>
<div class="t h" style="left:260px;top:1564px">My Apps</div>
<svg style="left:584px;top:1557px" width="26" height="26"><circle cx="13" cy="13" r="13" fill="#005296"/><path d="M6.500 13h12M14 8.500l4.500 4.500-4.500 4.500" fill="none" stroke="#fff" stroke-width="1.500"/></svg>
<div class="ln" style="left:242px;top:1601px;width:387px"></div>
<svg style="left:272px;top:1635px" width="40" height="24"><text x="1" y="19" font-family="Liberation Sans,sans-serif" font-style="italic" font-weight="700" font-size="20" letter-spacing="-3.200" fill="#fff" stroke="#00706f" stroke-width="1.500">ADP</text></svg>
<svg style="left:371px;top:1632px" width="28" height="28"><path d="M18 5.500A9 9 0 1 0 18 22.500" fill="none" stroke="#00706f" stroke-width="5"/><circle cx="22" cy="14" r="3" fill="#00706f"/></svg>
<svg style="left:466px;top:1632px" width="28" height="28"><circle cx="14" cy="14" r="10" fill="none" stroke="#00706f" stroke-width="7" stroke-dasharray="3.700 1.530"/><path d="M14 14l-4-3 4-3 4 3z" fill="#fff"/></svg>
<svg style="left:564px;top:1633px" width="26" height="27"><path d="M0 3l16-3v27L0 24z" fill="#00706f"/><path d="M17 7h9v14h-9z" fill="#00706f"/><path d="M17 8l4.500 3.500L26 8v2l-4.500 3.500L17 10z" fill="#fff"/><text x="4" y="18" font-family="Liberation Sans,sans-serif" font-size="11" font-weight="700" fill="#fff">0</text></svg>
<div class="t c" style="left:291px;top:1671px;font-size:13.8px;color:#3a3f46">ADP</div>
<div class="t c" style="left:385px;top:1671px;font-size:13.8px;color:#3a3f46">Concur</div>
<div class="t c" style="left:480px;top:1671px;font-size:13.8px;color:#3a3f46">Coupa</div>
<div class="t c" style="left:577px;top:1671px;font-size:13.8px;color:#3a3f46">Webmail</div>

<!-- footer -->
<div style="position:absolute;left:0;top:1815px;width:1280px;height:271px;background:#005296"></div>
<div class="t fh" style="left:240px;top:1877px">Marketing</div>
<div class="t fh" style="left:416px;top:1877px">Diversity and Inclusion</div>
<div class="t fh" style="left:640px;top:1877px">Social Responsibilities</div>
<div class="t fl" style="left:240px;top:1909px">Media Relations</div>
<div class="t fl" style="left:240px;top:1940px">Press Releases</div>
<div class="t fl" style="left:240px;top:1972px">Brand Library</div>
<div class="t fl" style="left:416px;top:1909px">Purpose</div>
<div class="t fl" style="left:416px;top:1940px">Employee Networks</div>
<div class="t fl" style="left:416px;top:1972px">Events</div>
<div class="t fl" style="left:640px;top:1909px">Global Impact</div>
<div class="t fl" style="left:640px;top:1940px">Community</div>
<div class="t fl" style="left:640px;top:1972px">Compaigns</div>
<div class="t fb" style="left:240px;top:2050px">Terms and Conditions</div>
<div class="t fb" style="left:340px;top:2050px">Privacy Statement</div>
<div class="t fb" style="left:431px;top:2050px">© Monochrome |&nbsp; All rights reserved.</div>

</body>
</html>
